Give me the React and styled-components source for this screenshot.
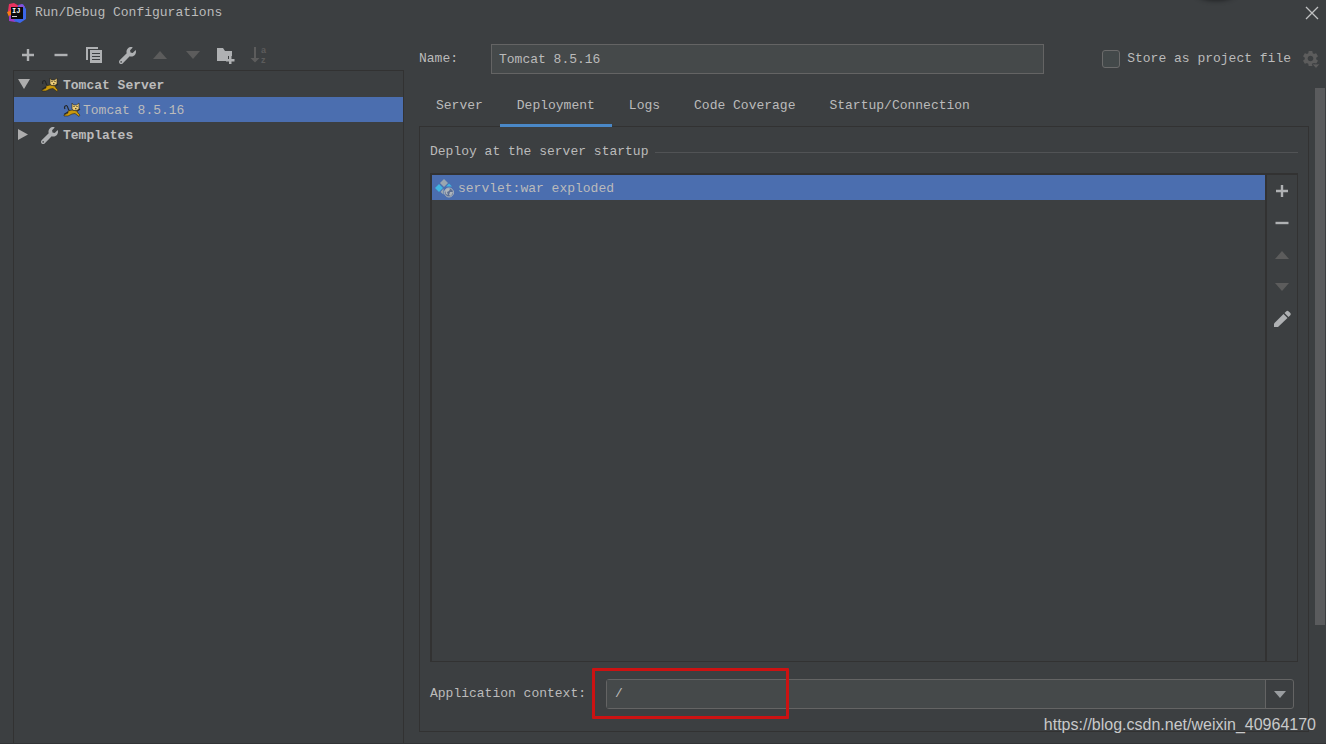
import React, { useState } from "react";
import styled, { createGlobalStyle } from "styled-components";
import { FaWrench } from "react-icons/fa";
import { MdSettings } from "react-icons/md";

const GlobalStyle = createGlobalStyle`
  * {
    box-sizing: border-box;
  }

  body {
    margin: 0;
    background-color: #3c3f41;
    color: #bbbbbb;
    font-family: "Liberation Mono", monospace;
    font-size: 13px;
    line-height: 20px;
  }

  button, input {
    font: inherit;
    color: inherit;
    margin: 0;
    padding: 0;
  }

  svg {
    display: block;
    flex: none;
  }
`;

const Dialog = styled.main`
  position: relative;
  min-height: 100vh;
  display: flex;
  flex-direction: column;
  overflow: hidden;
  border-bottom: 1px solid #323436;
`;

const TitleBar = styled.header`
  height: 26px;
  padding: 0 7px;
  display: flex;
  align-items: center;
  gap: 8px;
`;

const Title = styled.h1`
  flex: 1;
  margin: 0;
  font-size: 13px;
  font-weight: normal;
`;

const IconButton = styled.button`
  width: ${(props) => props.$size || 20}px;
  height: ${(props) => props.$size || 20}px;
  display: flex;
  align-items: center;
  justify-content: center;
  border: none;
  background: none;
  color: ${(props) => (props.disabled ? "#5c5c5c" : "#afb1b3")};
`;

const Body = styled.div`
  flex: 1;
  display: flex;
`;

const Sidebar = styled.aside`
  flex: 0 0 404px;
  padding: 19px 0 0 13px;
  display: flex;
  flex-direction: column;
`;

const SidebarTools = styled.div`
  padding-left: 5px;
  margin-bottom: 5px;
  display: flex;
  gap: 13px;
`;

const Tree = styled.ul`
  flex: 1;
  margin: 0;
  padding: 1px 0 0;
  list-style: none;
  border: 1px solid #323232;
  border-bottom: none;
`;

const TreeRow = styled.li`
  height: 25px;
  padding: 3px 0 0 ${(props) => (props.$child ? 49 : 4)}px;
  display: flex;
  align-items: center;
  background-color: ${(props) => (props.$selected ? "#4b6eaf" : "transparent")};
  font-weight: ${(props) => (props.$child ? "normal" : "bold")};
`;

const TreeArrow = styled.span`
  width: 23px;
  display: flex;
`;

const TreeIcon = styled.span`
  width: ${(props) => (props.$tight ? 20 : 22)}px;
  padding-bottom: 2px;
  color: #afb1b3;
`;

const Content = styled.section`
  flex: 1;
  min-width: 0;
  padding: 18px 0 0 15px;
  display: flex;
  flex-direction: column;
`;

const NameRow = styled.div`
  padding-right: 6px;
  margin-bottom: 11px;
  display: flex;
  align-items: center;
`;

const NameLabel = styled.label`
  width: 72px;
`;

const NameInput = styled.input`
  flex: 1;
  min-width: 0;
  height: 30px;
  padding: 0 7px;
  border: 1px solid #646464;
  background-color: #45494a;
`;

const StoreLabel = styled.label`
  margin: 0 11px 0 58px;
  display: flex;
  align-items: center;
  gap: 7px;
`;

const CheckBox = styled.input`
  appearance: none;
  width: 18px;
  height: 18px;
  border: 1px solid #6b6b6b;
  border-radius: 3px;
  background-color: #43494a;
`;

const ScrollArea = styled.div`
  flex: 1;
  display: flex;
`;

const Page = styled.div`
  flex: 1;
  min-width: 0;
  display: flex;
  flex-direction: column;
`;

const Tabs = styled.div`
  z-index: 1;
  margin-bottom: -1px;
  display: flex;
`;

const Tab = styled.button`
  height: 42px;
  padding: 0 17px;
  border: none;
  border-top: 3px solid transparent;
  border-bottom: 3px solid ${(props) => (props.$active ? "#4a88c7" : "transparent")};
  background: none;
`;

const Panel = styled.div`
  flex: 1;
  margin-bottom: 11px;
  padding: 15px 10px 22px;
  border: 1px solid #323232;
  display: flex;
  flex-direction: column;
`;

const GroupTitle = styled.h2`
  margin: 0 0 11px;
  display: flex;
  align-items: center;
  gap: 7px;
  font-size: 13px;
  font-weight: normal;

  &::after {
    content: "";
    flex: 1;
    height: 1px;
    background-color: #515355;
  }
`;

const Artifacts = styled.div`
  flex: 1;
  display: flex;
  border: 1px solid #323232;
  border-width: 2px 1px 1px 2px;
`;

const ArtifactList = styled.ul`
  flex: 1;
  margin: 0;
  padding: 0;
  list-style: none;
`;

const Artifact = styled.li`
  height: 25px;
  padding: 2px 0 0 3px;
  display: flex;
  align-items: center;
  gap: 4px;
  background-color: #4b6eaf;
`;

const ArtifactTools = styled.div`
  width: 32px;
  padding-top: 6px;
  border-left: 2px solid #323232;
  display: flex;
  flex-direction: column;
  align-items: center;
  gap: 12px;
`;

const ContextRow = styled.div`
  margin: 17px 4px 0 0;
  display: flex;
  align-items: center;
`;

const ContextLabel = styled.label`
  width: 176px;
`;

const ComboBox = styled.div`
  position: relative;
  flex: 1;
  height: 30px;
  display: flex;
  border: 1px solid #646464;
  border-radius: 3px;
`;

const ComboInput = styled.input`
  flex: 1;
  min-width: 0;
  padding: 0 8px;
  border: none;
  background-color: #45494a;
`;

const ComboButton = styled.button`
  width: 28px;
  border: none;
  border-left: 1px solid #646464;
  background: none;
  color: #9a9da0;
  display: flex;
  align-items: center;
  justify-content: center;
`;

const Highlight = styled.div`
  position: absolute;
  top: -12px;
  left: -15px;
  width: 197px;
  height: 51px;
  border: 3px solid #cc1212;
  border-radius: 1px;
  pointer-events: none;
`;

const ScrollTrack = styled.div`
  width: 17px;
  padding: 3px 1px 0 6px;
`;

const ScrollThumb = styled.div`
  height: 82%;
  background-color: #5a5b5d;
`;

const Watermark = styled.a`
  position: absolute;
  right: 10px;
  bottom: 8px;
  z-index: 2;
  color: #c8c9ca;
  font-family: "Liberation Sans", Arial, sans-serif;
  font-size: 16px;
  text-decoration: none;
`;

const Shade = styled.div`
  position: absolute;
  top: -12px;
  right: 92px;
  width: 36px;
  height: 12px;
  border-radius: 50%;
  box-shadow: 0 0 4px 1px #222426;
`;

const PlusIcon = () => (
  <svg width="14" height="14" viewBox="0 0 14 14">
    <path d="M5.800 1h2.400v4.800H13v2.400H8.200V13H5.800V8.200H1V5.800h4.800z" fill="currentColor" />
  </svg>
);

const MinusIcon = () => (
  <svg width="14" height="14" viewBox="0 0 14 14">
    <path d="M.5 5.800h13v2.400H.5z" fill="currentColor" />
  </svg>
);

const CopyIcon = () => (
  <svg width="18" height="18" viewBox="0 0 18 18" fill="currentColor">
    <path d="M1 1h12v2H3v11H1z" />
    <path fillRule="evenodd" d="M5 4h12v13H5zM7 7v1h8V7zm0 3v1h8v-1zm0 3v1h8v-1z" />
  </svg>
);

const UpIcon = () => (
  <svg width="14" height="8" viewBox="0 0 14 8">
    <path d="M7 0l7 8H0z" fill="currentColor" />
  </svg>
);

const DownIcon = () => (
  <svg width="14" height="8" viewBox="0 0 14 8">
    <path d="M0 0h14L7 8z" fill="currentColor" />
  </svg>
);

const FolderIcon = () => (
  <svg width="20" height="18" viewBox="0 0 20 18" fill="currentColor">
    <path d="M1 2h6l2 3h7v5h-4v3h-2v2H1z" />
    <path d="M13 10h2.500v3h3v2.400h-3v3H13v-3h-3V13h3z" />
  </svg>
);

const SortIcon = () => (
  <svg width="18" height="20" viewBox="0 0 18 20" fill="currentColor">
    <path d="M4 2h2v11h3.500L5 17.500.5 13H4z" />
    <text x="11" y="8" fontSize="9" fontWeight="bold" fontFamily="Liberation Sans, sans-serif">a</text>
    <text x="11" y="18" fontSize="9" fontWeight="bold" fontFamily="Liberation Sans, sans-serif">z</text>
  </svg>
);

const PencilIcon = () => (
  <svg width="18" height="18" viewBox="0 0 18 18" fill="currentColor">
    <path d="M1 13.500L10.500 4l4 4L5 17H1z" />
    <path d="M11.500 3l1.600-1.600a1.800 1.800 0 0 1 2.600 0l1.400 1.400a1.800 1.800 0 0 1 0 2.600L15.500 7z" />
  </svg>
);

const CloseIcon = () => (
  <svg width="14" height="14" viewBox="0 0 14 14">
    <path d="M1 1l12 12M13 1L1 13" stroke="#c0c1c2" strokeWidth="1.3" />
  </svg>
);

const AppIcon = () => (
  <svg width="20" height="20" viewBox="0 0 20 20">
    <path d="M2 1l5-1 5 3-5 7-5 2-1-4z" fill="#e9325f" />
    <path d="M0 9l5-2v6l-3 1z" fill="#f97a12" />
    <path d="M2 13l5-3 4 7-3 2-6-1z" fill="#9a3bc4" />
    <path d="M11 3l5-2 3 5v10l-6 4-6-2z" fill="#3c66ea" />
    <path d="M11 2l4-1 3 3-4 2z" fill="#8a50d8" />
    <path d="M4 4h12v12H4z" fill="#0b0b0d" />
    <text x="5" y="10" fontSize="7" fontWeight="bold" fontFamily="Liberation Mono, monospace" fill="#ffffff">IJ</text>
    <path d="M5 13h5v1H5z" fill="#d0d0d0" />
  </svg>
);

const TomcatIcon = () => (
  <svg width="18" height="16" viewBox="0 0 18 16">
    <path d="M7 8.500C4.500 9 5.500 4 3.500 3.500 1.500 3.500 1 5.500 2 7M1 12.500L5 10M14 9l3-2" fill="none" stroke="#242628" strokeWidth="1.200" />
    <path d="M5 9l4-1 5 1 1 2 2 2-1 1.500-4-3-3 .5-4 2H1V13l4-2z" fill="#c9980b" stroke="#2b2718" strokeWidth="0.600" />
    <path d="M9 1l1.500 2h3L16 1v5.500L14 8.500h-3.500L9 6.500z" fill="#edcd78" stroke="#2b2718" strokeWidth="0.600" />
    <path d="M10.500 4h1v1h-1zM13.500 4h1v1h-1zM12 6.200h1.500v1H12z" fill="#2b2718" />
  </svg>
);

const ArtifactIcon = () => (
  <svg width="19" height="19" viewBox="0 0 19 19">
    <path d="M9 0l4 4-4 4-4-4z" fill="#9aa7b0" />
    <path d="M4 5l4 4-4 4-4-4z" fill="#40b6e0" />
    <path d="M14 4.500l3 3h-6z" fill="#40b6e0" />
    <path d="M8.500 9.500v6L5.500 13z" fill="#9aa7b0" />
    <circle cx="14" cy="13.500" r="4.500" fill="#5d6f92" stroke="#afb6bd" strokeWidth="1" />
    <path d="M10 11l3-2 2 1-1 2-2 1 1 3-2-1zM15 13l3 0-2 4-2-1z" fill="#afb6bd" />
  </svg>
);

const GearIcon = () => (
  <svg width="18" height="20" viewBox="0 0 18 20">
    <MdSettings x="-1" y="0" size={19} />
    <path d="M10 15h8l-4 4.500z" fill="currentColor" stroke="#3c3f41" strokeWidth="0.800" />
  </svg>
);

const tabs = ["Server", "Deployment", "Logs", "Code Coverage", "Startup/Connection"];

const App = () => {
  const [activeTab, setActiveTab] = useState("Deployment");
  const [name, setName] = useState("Tomcat 8.5.16");
  const [context, setContext] = useState("/");

  return (
    <Dialog>
      <GlobalStyle />
      <Shade />
      <TitleBar>
        <AppIcon />
        <Title>Run/Debug Configurations</Title>
        <IconButton $size={14} aria-label="Close"><CloseIcon /></IconButton>
      </TitleBar>
      <Body>
        <Sidebar>
          <SidebarTools>
            <IconButton aria-label="Add"><PlusIcon /></IconButton>
            <IconButton aria-label="Remove"><MinusIcon /></IconButton>
            <IconButton aria-label="Copy"><CopyIcon /></IconButton>
            <IconButton aria-label="Edit templates"><FaWrench size={17} /></IconButton>
            <IconButton aria-label="Move up" disabled><UpIcon /></IconButton>
            <IconButton aria-label="Move down" disabled><DownIcon /></IconButton>
            <IconButton aria-label="New folder"><FolderIcon /></IconButton>
            <IconButton aria-label="Sort" disabled><SortIcon /></IconButton>
          </SidebarTools>
          <Tree>
            <TreeRow>
              <TreeArrow>
                <svg width="12" height="14" viewBox="0 0 12 14">
                  <path d="M0 0h12L6 10z" fill="#adadad" />
                </svg>
              </TreeArrow>
              <TreeIcon><TomcatIcon /></TreeIcon>
              Tomcat Server
            </TreeRow>
            <TreeRow $child $selected>
              <TreeIcon $tight><TomcatIcon /></TreeIcon>
              Tomcat 8.5.16
            </TreeRow>
            <TreeRow>
              <TreeArrow>
                <svg width="12" height="14" viewBox="0 0 12 14">
                  <path d="M0 0l10 5.500-10 5.500z" fill="#adadad" />
                </svg>
              </TreeArrow>
              <TreeIcon><FaWrench size={17} /></TreeIcon>
              Templates
            </TreeRow>
          </Tree>
        </Sidebar>
        <Content>
          <NameRow>
            <NameLabel htmlFor="name">Name:</NameLabel>
            <NameInput id="name" value={name} onChange={(e) => setName(e.target.value)} />
            <StoreLabel>
              <CheckBox type="checkbox" />
              Store as project file
            </StoreLabel>
            <IconButton $size={18} aria-label="Storage settings" disabled><GearIcon /></IconButton>
          </NameRow>
          <ScrollArea>
            <Page>
              <Tabs role="tablist">
                {tabs.map((tab) => (
                  <Tab
                    key={tab}
                    role="tab"
                    aria-selected={tab === activeTab}
                    $active={tab === activeTab}
                    onClick={() => setActiveTab(tab)}
                  >
                    {tab}
                  </Tab>
                ))}
              </Tabs>
              <Panel>
                <GroupTitle>Deploy at the server startup</GroupTitle>
                <Artifacts>
                  <ArtifactList>
                    <Artifact>
                      <ArtifactIcon />
                      servlet:war exploded
                    </Artifact>
                  </ArtifactList>
                  <ArtifactTools>
                    <IconButton aria-label="Add artifact"><PlusIcon /></IconButton>
                    <IconButton aria-label="Remove artifact"><MinusIcon /></IconButton>
                    <IconButton aria-label="Move artifact up" disabled><UpIcon /></IconButton>
                    <IconButton aria-label="Move artifact down" disabled><DownIcon /></IconButton>
                    <IconButton aria-label="Edit artifact"><PencilIcon /></IconButton>
                  </ArtifactTools>
                </Artifacts>
                <ContextRow>
                  <ContextLabel htmlFor="context">Application context:</ContextLabel>
                  <ComboBox>
                    <ComboInput id="context" value={context} onChange={(e) => setContext(e.target.value)} />
                    <ComboButton aria-label="Show contexts">
                      <svg width="12" height="7" viewBox="0 0 12 7">
                        <path d="M0 0h12L6 7z" fill="currentColor" />
                      </svg>
                    </ComboButton>
                    <Highlight />
                  </ComboBox>
                </ContextRow>
              </Panel>
            </Page>
            <ScrollTrack>
              <ScrollThumb />
            </ScrollTrack>
          </ScrollArea>
        </Content>
      </Body>
      <Watermark href="https://blog.csdn.net/weixin_40964170">https://blog.csdn.net/weixin_40964170</Watermark>
    </Dialog>
  );
};

export default App;
